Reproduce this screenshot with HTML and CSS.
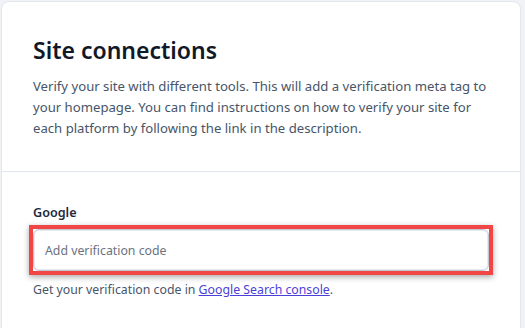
FILE: index.html
```html
<!DOCTYPE html>
<html lang="en">
<head>
<meta charset="utf-8">
<title>Site connections</title>
<link rel="stylesheet" href="styles.css">
</head>
<body>
<div class="card">
  <section class="intro">
    <h1 class="title">Site connections</h1>
    <p class="desc">Verify your site with different tools. This will add a verification meta tag to your homepage. You can find instructions on how to verify your site for each platform by following the link in the description.</p>
  </section>
  <section class="field">
    <label class="label" for="google">Google</label>
    <div class="highlight">
      <input class="input" id="google" type="text" placeholder="Add verification code">
    </div>
    <p class="help">Get your verification code in <a class="link" href="#">Google Search console</a>.</p>
  </section>
</div>
</body>
</html>
```
FILE: styles.css
```css
* { box-sizing: border-box; }
html, body { margin: 0; padding: 0; }
body {
  background: #f0f2f5;
  font-family: "Noto Sans", "Open Sans", sans-serif;
  padding: 1px 0 0 1px;
  height: 328px;
  overflow: hidden;
}
.card {
  width: 520px;
  min-height: 340px;
  background: #fff;
  border: 1px solid #e2e6ee;
  border-radius: 8px 8px 0 0;
}
.intro {
  padding: 32px 28px 32px 31px;
  border-bottom: 1px solid #e2e6ee;
}
.title {
  margin: 0;
  font-size: 23px;
  line-height: 32px;
  font-weight: 600;
  color: #111827;
}
.desc {
  margin: 10px 0 0;
  font-size: 13.15px;
  line-height: 21px;
  color: #475569;
}
.field {
  padding: 30px 31px;
}
.label {
  display: block;
  font-size: 12.6px;
  line-height: 21px;
  font-weight: 600;
  color: #1e293b;
}
.highlight {
  margin: 2px -4px 0;
  border: 4px solid #f04646;
  box-shadow: 0 2px 6px rgba(0, 0, 0, 0.35);
}
.input {
  display: block;
  width: 100%;
  height: 42px;
  border: 1px solid #c3c8d0;
  border-radius: 6px;
  box-shadow: inset 0 0 0 1px #e6e9ee;
  padding: 0 11px;
  font-family: inherit;
  font-size: 12.3px;
  color: #1e293b;
  background: #fff;
  outline: none;
}
.input::placeholder { color: #6b7280; }
.help {
  margin: 4px 0 0;
  font-size: 12.3px;
  line-height: 21px;
  color: #475569;
}
.link { color: #4b3fd8; text-decoration: underline; }
```
